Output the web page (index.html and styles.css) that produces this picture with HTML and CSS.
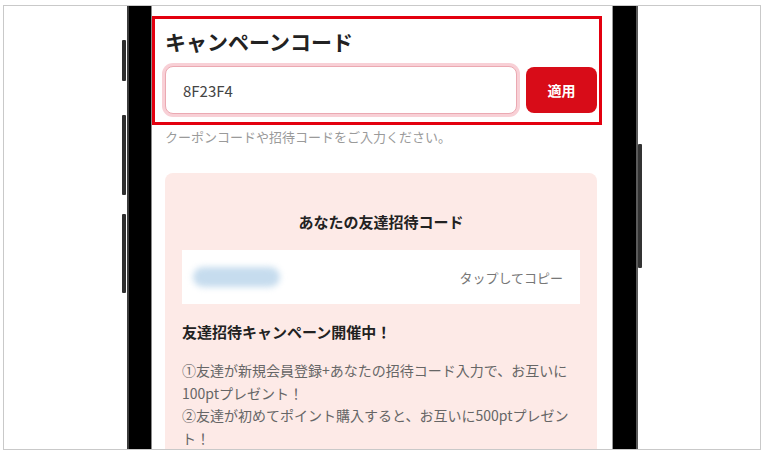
FILE: index.html
```html
<!DOCTYPE html>
<html lang="ja">
<head>
<meta charset="utf-8">
<link rel="stylesheet" href="styles.css">
</head>
<body>
<div class="frame">
  <div class="device">
    <span class="side-btn btn-a"></span>
    <span class="side-btn btn-b"></span>
    <span class="side-btn btn-c"></span>
    <span class="side-btn btn-r"></span>
    <div class="screen">
      <section class="highlight">
        <h2 class="title">キャンペーンコード</h2>
        <div class="code-row">
          <div class="code-input">8F23F4</div>
          <button class="apply-btn">適用</button>
        </div>
      </section>
      <p class="helper">クーポンコードや招待コードをご入力ください。</p>
      <div class="invite-card">
        <h3 class="invite-title">あなたの友達招待コード</h3>
        <div class="invite-code">
          <span class="blurred-code"></span>
          <span class="copy-label">タップしてコピー</span>
        </div>
        <h4 class="campaign-title">友達招待キャンペーン開催中！</h4>
        <p class="campaign-text">①友達が新規会員登録+あなたの招待コード入力で、お互いに100ptプレゼント！<br>②友達が初めてポイント購入すると、お互いに500ptプレゼント！</p>
      </div>
    </div>
  </div>
</div>
</body>
</html>
```
FILE: styles.css
```css
* { box-sizing: border-box; }
html, body { margin: 0; padding: 0; background: #fff; }
body {
  font-family: "Noto Sans CJK JP", "Noto Sans", sans-serif;
}
.frame {
  margin: 5px 0 0 3px;
  width: 758px;
  height: 445px;
  border: 1px solid #c9c9c9;
  overflow: hidden;
  display: flex;
}
.device {
  position: relative;
  margin-left: 123px;
  width: 511px;
  height: 460px;
  background: #000;
  border-left: 2px solid #3c3c3c;
  border-right: 2px solid #5a5a5a;
  padding: 0 23px 0 22px;
  display: flex;
}
.side-btn {
  position: absolute;
  width: 4px;
  background: #2e2e2e;
  border-radius: 1px;
}
.btn-a { left: -7px; top: 34px; height: 41px; }
.btn-b { left: -7px; top: 109px; height: 80px; }
.btn-c { left: -7px; top: 208px; height: 79px; }
.btn-r { right: -6px; top: 138px; height: 124px; background: #333; }
.screen {
  width: 462px;
  background: #fff;
  box-shadow: inset 1px 0 0 #8a8a8a, inset -1px 0 0 #9a9a9a;
  display: flex;
  flex-direction: column;
}
.highlight {
  margin: 10px 0 0 1px;
  width: 450px;
  border: 3px solid #e3000f;
  padding: 7px 2px 8px 10px;
}
.title {
  margin: 0;
  font-size: 21px;
  line-height: 31px;
  font-weight: 700;
  color: #222;
}
.code-row {
  margin-top: 9px;
  display: flex;
  align-items: center;
  gap: 9px;
}
.code-input {
  flex: 1;
  height: 48px;
  border: 1px solid #eba9b2;
  box-shadow: 0 0 0 3px #f8d0d6;
  border-radius: 8px;
  padding-left: 17px;
  display: flex;
  align-items: center;
  font-size: 15px;
  color: #444;
  background: #fff;
}
.apply-btn {
  width: 71px;
  height: 46px;
  border: none;
  border-radius: 8px;
  background: #d80c18;
  color: #fff;
  font-family: inherit;
  font-size: 14px;
  font-weight: 700;
  padding: 0;
}
.helper {
  margin: 3px 0 0 14px;
  font-size: 13px;
  line-height: 18px;
  color: #9a9a9a;
}
.invite-card {
  margin: 27px 16px 0 14px;
  background: #fdeae7;
  border-radius: 8px;
  padding: 38px 17px 20px;
}
.invite-title {
  margin: 0;
  text-align: center;
  font-size: 15px;
  line-height: 22px;
  font-weight: 700;
  color: #222;
}
.invite-code {
  margin-top: 17px;
  height: 54px;
  background: #fff;
  display: flex;
  align-items: center;
  justify-content: space-between;
  padding: 0 17px 0 11px;
}
.blurred-code {
  width: 87px;
  height: 20px;
  border-radius: 10px;
  background: #c6dcee;
  filter: blur(3px);
}
.copy-label {
  font-size: 13px;
  color: #777;
}
.campaign-title {
  margin: 17px 0 0;
  font-size: 15px;
  line-height: 22px;
  font-weight: 700;
  color: #222;
}
.campaign-text {
  margin: 16px 0 0;
  font-size: 14px;
  line-height: 22.6px;
  color: #666;
}
```
